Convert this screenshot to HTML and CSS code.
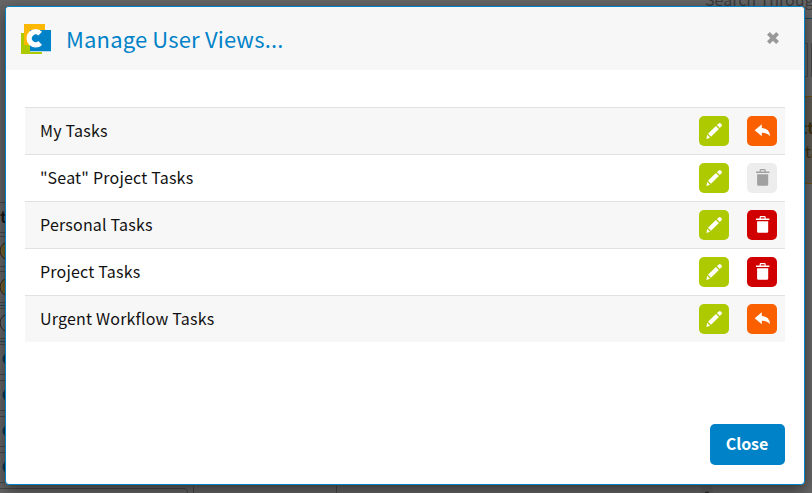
FILE: index.html
```html
<!DOCTYPE html>
<html lang="en">
<head>
<meta charset="utf-8">
<title>Manage User Views</title>
<link rel="stylesheet" href="styles.css">
</head>
<body>
<svg class="defs" width="0" height="0">
  <symbol id="pencil" viewBox="0 0 30 30"><path d="M17.9 9.1 20.2 7.2Q21 6.7 21.7 7.4L22.7 8.5Q23.3 9.2 22.7 9.9L20.8 12ZM16.9 10.1 19.9 13 12 20.7 9 17.8ZM8.2 18.8 11 21.7 7.4 23.1Z"/></symbol>
  <symbol id="undo" viewBox="0 0 30 30"><path d="M7.7 14.3 14.8 8.3V12Q22.7 12.4 23 20.2Q20 16.4 14.8 16.7V20.2Z"/></symbol>
  <symbol id="trash" viewBox="0 0 30 30"><path d="M9 8.6H12.6V7.2Q12.6 6 13.8 6H17.5Q18.7 6 18.7 7.2V8.6H22.4V10H9ZM13.8 8.6H17.5V7.2H13.8ZM10.1 11.3H21.2V21.5Q21.2 22.7 20 22.7H11.3Q10.1 22.7 10.1 21.5Z" fill-rule="evenodd"/></symbol>
</svg>
<svg class="backdrop" viewBox="0 0 812 493" aria-hidden="true">
  <g fill="none" stroke="#494949">
    <path d="M0 202.5H8M0 232.5H8M0 236.5H8M0 266.5H8M0 271.5H8M0 302.5H8M0 308.5H8M0 338.5H8M0 344.5H8M0 374.5H8M0 380.5H8M0 410.5H8M0 416.5H8M0 446.5H8M0 452.5H8M0 482.5H8M0 488.5H184Q187.500 488.500 187.500 493M193.500 486V493M336.500 486V493M804 43.500H807.500V76.500H804M812 43.500H811.500V76.500H812"/>
    <path d="M0 305.500H8M0 341.500H8M804 18.500H812" stroke="#214960"/>
  </g>
  <path d="M804 97H812V183H804Z" fill="#5f5b53"/>
  <path d="M804 96.500H812M804 183.500H812" stroke="#6e5117"/>
  <g stroke="#292929" stroke-width="1">
    <circle cx="9" cy="251" r="9" fill="#77622f"/><circle cx="9" cy="287" r="9" fill="#77622f"/><circle cx="9" cy="323" r="9" fill="#6a6a6a"/>
  </g>
  <g fill="#12394e"><circle cx="9" cy="359" r="6.500"/><circle cx="9" cy="395" r="6.500"/><circle cx="9" cy="431" r="6.500"/><circle cx="9" cy="467" r="6.500"/></g>
  <path d="M701 485H713V493H701Z" fill="#606060"/><circle cx="707" cy="494" r="2.500" fill="#292929"/>
  <text x="705" y="6" class="hint">Search Through</text>
  <text x="0" y="223" class="label">t</text>
  <text x="799" y="134" class="note note-bold">ct</text>
  <text x="805" y="158" class="note">ta</text>
</svg>
<main class="modal">
  <header class="modal-header">
    <svg class="logo" viewBox="0 0 30 30">
      <path fill="#adca00" d="M0 9H21V30H0Z"/><path fill="#ffb800" d="M3 0H24V21H3Z"/><path fill="#b5d9ed" d="M9 27H30V28H9Z"/><path fill="#0082c8" d="M9 6H30V27H9Z"/>
      <path d="M19.200 9.600A6.500 6.500 0 1 0 19.200 19" fill="none" stroke="#fff" stroke-width="5.400"/>
    </svg>
    <h1>Manage User Views...</h1>
    <svg class="dismiss" viewBox="0 0 12 12"><path d="M1.400 1.400 10.600 10.600M10.600 1.400 1.400 10.600" stroke="#999" stroke-width="3.900"/></svg>
  </header>
  <ul class="views">
    <li><span>My Tasks</span><button class="action edit"><svg><use href="#pencil"/></svg></button><button class="action undo"><svg><use href="#undo"/></svg></button></li>
    <li><span>"Seat" Project Tasks</span><button class="action edit"><svg><use href="#pencil"/></svg></button><button class="action off" disabled><svg><use href="#trash"/></svg></button></li>
    <li><span>Personal Tasks</span><button class="action edit"><svg><use href="#pencil"/></svg></button><button class="action delete"><svg><use href="#trash"/></svg></button></li>
    <li><span>Project Tasks</span><button class="action edit"><svg><use href="#pencil"/></svg></button><button class="action delete"><svg><use href="#trash"/></svg></button></li>
    <li><span>Urgent Workflow Tasks</span><button class="action edit"><svg><use href="#pencil"/></svg></button><button class="action undo"><svg><use href="#undo"/></svg></button></li>
  </ul>
  <footer class="modal-footer"><button class="close">Close</button></footer>
</main>
</body>
</html>
```
FILE: styles.css
```css
* { box-sizing: border-box; }
body {
  margin: 0;
  width: 812px;
  height: 493px;
  overflow: hidden;
  background: #666;
  color: #111;
  font-family: "Noto Sans CJK SC", "Noto Sans", sans-serif;
}
.defs { position: absolute; }
.backdrop { position: absolute; top: 0; left: 0; width: 812px; height: 493px; }
.hint { font-size: 16px; fill: #3c3c3c; }
.label { font-size: 16px; font-weight: 700; fill: #1c1c1c; }
.note { font-size: 16px; fill: #40310f; }
.note-bold { font-weight: 700; }
.modal {
  position: relative;
  display: flex;
  flex-direction: column;
  width: 800px;
  height: 479px;
  margin: 6px 0 0 5px;
  border: 1px solid #0082c8;
  border-radius: 4px;
  background: #fff;
  box-shadow: 0 5px 15px rgba(0, 0, 0, .5);
  overflow: hidden;
}
.modal-header {
  display: flex;
  align-items: center;
  height: 63px;
  padding: 0 25px 0 15px;
  background: #f7f7f7;
}
.logo { width: 30px; height: 30px; }
h1 {
  flex: 1;
  margin: 0 0 2px 15px;
  color: #0082c8;
  font-size: 22px;
  font-weight: 400;
  line-height: 32px;
  letter-spacing: .16px;
}
.dismiss { width: 12px; height: 12px; overflow: visible; margin-bottom: 1px; }
.views {
  width: 760px;
  margin: 37px 0 0 19px;
  padding: 0;
  list-style: none;
}
.views li {
  display: flex;
  align-items: center;
  height: 47px;
  padding: 0 8px 0 15px;
  border-top: 1px solid #e1e1e1;
  font-size: 16px;
  line-height: 24px;
  letter-spacing: .2px;
}
.views li:nth-child(odd) { background: #f7f7f7; }
.views span { flex: 1; padding-bottom: 2px; }
.action {
  width: 30px;
  height: 30px;
  margin-left: 18px;
  padding: 0;
  border: 0;
  border-radius: 5px;
}
.action svg { display: block; width: 30px; height: 30px; fill: #fff; }
.views .edit { background: #adca00; }
.views .undo { background: #fa5f00; }
.views .delete { background: #d00000; }
.views .off { background: #ededed; }
.views .off svg { fill: #a0a0a0; }
.modal-footer {
  display: flex;
  justify-content: flex-end;
  margin-top: auto;
  padding: 0 19px 19px;
}
.close {
  width: 75px;
  height: 41px;
  padding: 0 1px 4px 0;
  border: 0;
  border-radius: 5px;
  background: #0082c8;
  color: #fff;
  font-family: inherit;
  font-size: 16px;
  font-weight: 700;
  line-height: 24px;
}
```
